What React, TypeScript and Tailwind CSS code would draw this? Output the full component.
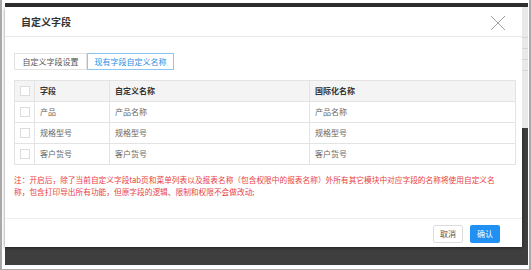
const rows = [
  { field: "产品", custom: "产品名称", intl: "产品名称" },
  { field: "规格型号", custom: "规格型号", intl: "规格型号" },
  { field: "客户货号", custom: "客户货号", intl: "客户货号" },
];

function Check() {
  return <span className="block h-[10px] w-[10px] border border-[#dcdcdc] bg-white" />;
}

export default function App() {
  return (
    <div
      className="h-[270px] w-[531px] overflow-hidden border-r-2 border-b border-l-2 border-[#a9a9a9] bg-white pt-[3px] pr-[1px] pb-[4px] pl-[3px]"
      style={{ fontFamily: '"Noto Sans CJK SC", "Noto Sans", sans-serif' }}
    >
      <div className="flex h-full flex-col bg-[#3e3e3e]">
        <div className="h-[4px] shrink-0 bg-[#2f2f2f]" />
        <div className="flex flex-1">
          <div className="flex h-[240px] w-[517px] shrink-0 flex-col bg-white shadow-[0_1px_3px_rgba(0,0,0,0.5)]">
            <div className="flex h-[30px] shrink-0 items-center justify-between border-b border-[#e8e8e8] pr-[16px] pl-[16px]">
              <span className="text-[10px] font-bold text-[#333]">自定义字段</span>
              <svg width="16" height="16" viewBox="0 0 16 16" className="mt-[2px]">
                <path d="M1 1L15 15M15 1L1 15" stroke="#a0a0a0" strokeWidth="1" fill="none" />
              </svg>
            </div>

            <div className="flex flex-1 flex-col pt-[16px] pr-[6px] pl-[9px]">
              <div className="flex text-[8px] leading-none">
                <div className="flex h-[17px] w-[73px] items-center justify-center border border-[#e3e3e3] text-[#555]">
                  自定义字段设置
                </div>
                <div className="flex h-[17px] w-[87px] items-center justify-center border border-[#8fc6f2] text-[#2b8ee6]">
                  现有字段自定义名称
                </div>
              </div>

              <table className="mt-[10px] w-[502px] table-fixed border-collapse border border-[#e3e3e3] text-[8px]">
                <colgroup>
                  <col className="w-[20px]" />
                  <col className="w-[75px]" />
                  <col className="w-[200px]" />
                  <col />
                </colgroup>
                <thead>
                  <tr className="h-[21px] bg-[#f4f4f4] text-left font-bold text-[#333]">
                    <th className="border-r border-[#e3e3e3] pl-[5px]">
                      <Check />
                    </th>
                    <th className="border-r border-[#e3e3e3] pl-[5px]">字段</th>
                    <th className="border-r border-[#e3e3e3] pl-[5px]">自定义名称</th>
                    <th className="pl-[5px]">国际化名称</th>
                  </tr>
                </thead>
                <tbody className="text-[#666]">
                  {rows.map((r) => (
                    <tr key={r.field} className="h-[21px] border-t border-[#e3e3e3]">
                      <td className="border-r border-[#e3e3e3] pl-[5px]">
                        <Check />
                      </td>
                      <td className="border-r border-[#e3e3e3] pl-[5px]">{r.field}</td>
                      <td className="border-r border-[#e3e3e3] pl-[5px]">{r.custom}</td>
                      <td className="pl-[5px]">{r.intl}</td>
                    </tr>
                  ))}
                </tbody>
              </table>

              <p className="mt-[9px] text-[7.7px] leading-[12px] text-[#e8413f]">
                注：开启后，除了当前自定义字段tab页和菜单列表以及报表名称（包含权限中的报表名称）外所有其它模块中对应字段的名称将使用自定义名
                <br />
                称，包含打印导出所有功能，但原字段的逻辑、限制和权限不会做改动;
              </p>
            </div>

            <div className="flex h-[29px] shrink-0 items-start justify-end gap-[7px] border-t border-[#eeeeee] pt-[6px] pr-[22px]">
              <button className="flex h-[18px] w-[30px] items-center justify-center rounded-[2px] border border-[#dddddd] bg-white text-[8px] text-[#555]">
                取消
              </button>
              <button className="flex h-[18px] w-[30px] items-center justify-center rounded-[2px] bg-[#2190f3] text-[8px] text-white">
                确认
              </button>
            </div>
          </div>

          <div className="flex flex-1 flex-col">
            <div className="flex h-[121px] flex-col gap-[10px] bg-[#e9e9e9] pt-[30px]">
              <div className="h-px bg-[#d6d6d6]" />
              <div className="h-px bg-[#d6d6d6]" />
              <div className="h-px bg-[#d6d6d6]" />
              <div className="h-px bg-[#d6d6d6]" />
            </div>
          </div>
        </div>
      </div>
    </div>
  );
}
